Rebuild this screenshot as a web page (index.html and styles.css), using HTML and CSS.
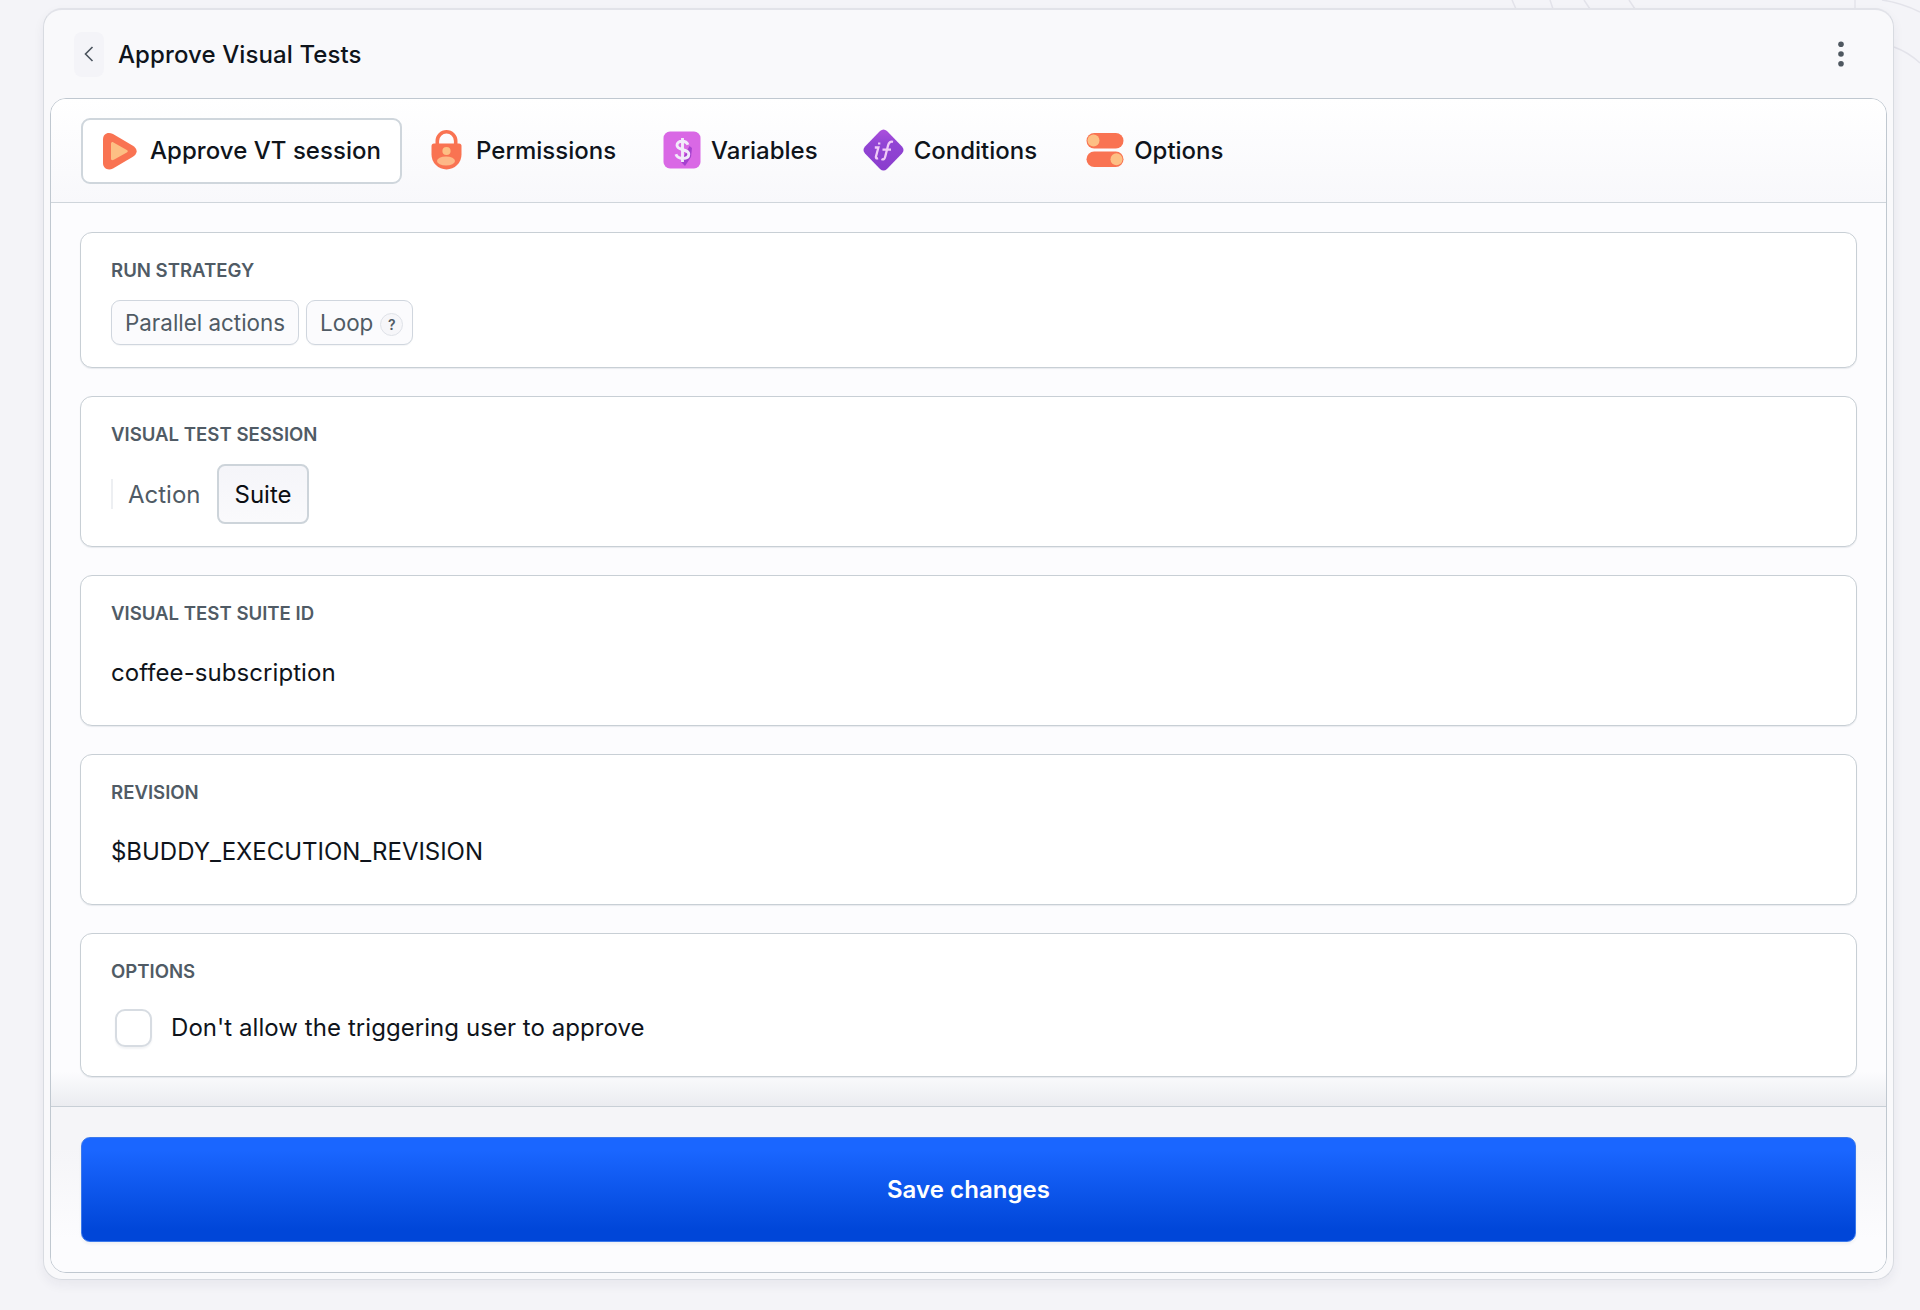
FILE: index.html
```
<!DOCTYPE html>
<html lang="en">
<head>
    <meta charset="UTF-8">
    <meta name="viewport" content="width=device-width, initial-scale=1.0">
    <title>Approve Visual Tests</title>
    <link rel="stylesheet" href="styles.css">
</head>
<body>
    <svg class="bg-lines" width="420" height="70" viewBox="1500 0 420 70">
        <path d="M1512 0l4 9M1550 0l3 9M1584 0l6 9M1629 0l6 9M1855 0v9M1882 0q20 3 38 12M1894 47q14 5 26 16"/>
    </svg>

    <div class="panel">
        <header class="panel-header">
            <button class="back" type="button" aria-label="Back">
                <svg width="10" height="18" viewBox="0 0 10 18"><path d="M8.500 2L1.500 9l7 7"/></svg>
            </button>
            <h1 class="title">Approve Visual Tests</h1>
            <button class="more" type="button" aria-label="More">
                <svg width="6" height="26" viewBox="0 0 6 26">
                    <circle cx="3" cy="3.2" r="2.8"/>
                    <circle cx="3" cy="13" r="2.8"/>
                    <circle cx="3" cy="22.8" r="2.8"/>
                </svg>
            </button>
        </header>

        <main class="content">
            <nav class="tabs">
                <a class="tab tab-active">
                    <svg width="36" height="38" viewBox="0 0 36 38">
                        <path d="M1 7.500C1 1.500 6-.5 11 2l19.500 11.500c5.500 3.500 5.500 8 0 11.500L11 36.500C6 39 1 36.500 1 31z" fill="#f97352"/>
                        <path d="M9 12.200c0-2 1-2.600 2.500-1.800L24.800 18c1.300.8 1.300 1.700 0 2.500l-13 7.200c-1.800.9-2.800.4-2.800-1.200z" fill="#fdbf84"/>
                    </svg>
                    <span class="tab-text">Approve VT session</span>
                </a>
                <a class="tab tab-permissions">
                    <svg width="31" height="40" viewBox="0 0 31 40">
                        <path d="M6.300 16V11a9.200 9.200 0 0 1 18.400 0v5" fill="none" stroke="#f97352" stroke-width="3.600"/>
                        <path d="M3 13.500h25q2.500 0 2.500 2.500v8.500a15 15 0 0 1-30 0V16q0-2.500 2.500-2.500z" fill="#f97352"/>
                        <circle cx="15.500" cy="21" r="4.100" fill="#fdbf84"/>
                        <ellipse cx="15" cy="31" rx="9" ry="4.500" fill="#fdb887"/>
                    </svg>
                    <span class="tab-text">Permissions</span>
                </a>
                <a class="tab">
                    <svg width="38" height="38" viewBox="0 0 38 38">
                        <rect x=".5" y=".5" width="37" height="37" rx="6.500" fill="#d968e5"/>
                        <path d="M26.500 15l2.500 2-1 9-6 9-4-4z" fill="#a541cf"/>
                        <path d="M25 13.800c-1-2.400-3-3.500-5.800-3.500-3.300 0-5.200 1.600-5.200 4 0 5.700 11.800 3.200 11.800 8.800 0 2.800-2.200 4.400-5.900 4.400-3.500 0-6-1.500-7-4.200M19.500 7v24" fill="none" stroke="#f2eafa" stroke-width="2.900"/>
                    </svg>
                    <span class="tab-text">Variables</span>
                </a>
                <a class="tab tab-conditions">
                    <svg width="41" height="42" viewBox="0 0 41 42">
                        <defs>
                            <linearGradient id="ifFill" x1="0" y1="0" x2="0" y2="1">
                                <stop offset="0" stop-color="#ac4fdd"/>
                                <stop offset=".35" stop-color="#9144d4"/>
                                <stop offset="1" stop-color="#8a3dcd"/>
                            </linearGradient>
                        </defs>
                        <path d="M17 2.100q3.500-3 7 0l15 15.400q3 3.500 0 7L24 39.900q-3.500 3-7 0L2 24.500q-3-3.500 0-7z" fill="url(#ifFill)"/>
                        <path d="M11.800 18.500h3.600l-2.500 9.300q-.4 2 2.200 1.500M16.200 13.400v2.200M18.500 30q2.700 1.500 3.700-2.200l2.900-11.600q1.100-4.400 4.900-3.300M19.500 20.700h8.500" fill="none" stroke="#f0caf7" stroke-width="2.300"/>
                    </svg>
                    <span class="tab-text">Conditions</span>
                </a>
                <a class="tab tab-options">
                    <svg width="38" height="36" viewBox="0 0 38 36">
                        <rect x=".5" y="1" width="37" height="15.500" rx="7.700" fill="#f97352"/>
                        <rect x=".5" y="19.500" width="37" height="15.500" rx="7.700" fill="#f97352"/>
                        <circle cx="7.500" cy="8.500" r="6" fill="#fdbf84"/>
                        <circle cx="30.500" cy="27.300" r="6" fill="#fdbf84"/>
                    </svg>
                    <span class="tab-text">Options</span>
                </a>
            </nav>

            <form class="settings">
                <section class="card card-run">
                    <h2 class="label">RUN STRATEGY</h2>
                    <div class="chips">
                        <button class="chip" type="button">Parallel actions</button>
                        <button class="chip chip-loop" type="button">Loop <span class="help">?</span></button>
                    </div>
                </section>

                <section class="card">
                    <h2 class="label">VISUAL TEST SESSION</h2>
                    <div class="switch">
                        <span class="switch-item">Action</span>
                        <span class="switch-item switch-on">Suite</span>
                    </div>
                </section>

                <section class="card">
                    <h2 class="label">VISUAL TEST SUITE ID</h2>
                    <div class="value">coffee-subscription</div>
                </section>

                <section class="card">
                    <h2 class="label">REVISION</h2>
                    <div class="value value-rev">$BUDDY_EXECUTION_REVISION</div>
                </section>

                <section class="card card-options">
                    <h2 class="label">OPTIONS</h2>
                    <label class="check">
                        <input type="checkbox" class="check-box">
                        <span>Don't allow the triggering user to approve</span>
                    </label>
                </section>
            </form>

            <footer class="panel-footer">
                <button class="save" type="button">Save changes</button>
            </footer>
        </main>
    </div>
</body>
</html>
```
FILE: styles.css
```
* {
    box-sizing: border-box;
}
body {
    margin: 0;
    height: 1310px;
    padding: 8px 26px 30px 43px;
    background-color: #f4f4f8;
    font-family: Inter, sans-serif;
    color: #0f141b;
    overflow: hidden;
}
button {
    font-family: inherit;
    border: none;
    background: none;
    padding: 0;
}
svg {
    display: block;
    flex: none;
}
.bg-lines {
    position: absolute;
    top: 0;
    right: 0;
    z-index: -1;
    fill: none;
    stroke: #e3e3ea;
    stroke-width: 1.5;
}

/* outer frame */
.panel {
    height: 1272px;
    padding: 0 6px 6px;
    display: flex;
    flex-direction: column;
    background-color: #f9f9fb;
    border: 1px solid #d8dbe1;
    border-top: 2px solid #e2e3e9;
    border-radius: 19px;
    box-shadow: 0 5px 12px rgba(30, 40, 70, 0.06);
}
.panel-header {
    height: 88px;
    flex: none;
    display: flex;
    align-items: center;
    padding: 0 43px 0 24px;
}
.back {
    width: 30px;
    height: 45px;
    border-radius: 8px;
    background-color: #f4f4f8;
    display: flex;
    align-items: center;
    justify-content: center;
}
.back svg {
    margin-right: 1px;
    fill: none;
    stroke: #4a535d;
    stroke-width: 1.6;
}
.title {
    margin: 0 auto 0 14px;
    padding-top: 1px;
    font-size: 24px;
    font-weight: 500;
    line-height: 30px;
    letter-spacing: 0.1px;
}
.more svg {
    fill: #4f5860;
}

/* inner frame */
.content {
    flex: 1;
    display: flex;
    flex-direction: column;
    border: 1px solid #c0c8d0;
    border-radius: 16px;
    background-color: #fcfcfe;
    overflow: hidden;
}
.tabs {
    height: 104px;
    flex: none;
    display: flex;
    align-items: center;
    padding: 1px 30px 0;
    background: linear-gradient(#ffffff, #f8f8fb);
    border-bottom: 1px solid #cfd5db;
}
.tab {
    height: 66px;
    display: flex;
    align-items: center;
    padding: 0 17px 2px 30px;
    font-size: 24px;
    font-weight: 500;
}
.tab-text {
    margin-left: 10px;
}
.tab-active {
    padding: 0 19px 1px;
    border: 2px solid #cfd6dc;
    border-radius: 9px;
    background-color: #fff;
}
.tab-active .tab-text {
    margin-left: 12px;
    letter-spacing: 0.04px;
}
.tab-permissions {
    padding-left: 29px;
}
.tab-permissions .tab-text {
    margin-left: 14px;
}
.tab-conditions {
    padding-left: 28px;
}
.tab-options {
    padding-left: 32px;
}

.settings {
    flex: 1;
    display: flex;
    flex-direction: column;
    gap: 28px;
    padding: 29px;
    background: linear-gradient(rgba(235, 236, 240, 0), #ebecf0) bottom / 100% 34px no-repeat;
}
.card {
    height: 151px;
    flex: none;
    padding: 27px 30px 0;
    background-color: #fff;
    border: 1px solid #c8cfd5;
    border-radius: 12px;
    box-shadow: 0 1px 1px rgba(30, 50, 80, 0.09);
}
.card-run {
    height: 136px;
}
.card-options {
    height: 144px;
}
.label {
    margin: 0;
    font-size: 18.6px;
    font-weight: 600;
    line-height: 20px;
    color: #505b65;
}
.chips {
    display: flex;
    gap: 7px;
    margin-top: 20px;
}
.chip {
    height: 45px;
    padding: 0 13px;
    display: flex;
    align-items: center;
    font-size: 22.4px;
    color: #505b65;
    background-color: #fbfbfd;
    border: 1px solid #d0d6de;
    border-radius: 9px;
    box-shadow: 0 1px 1px rgba(30, 50, 80, 0.05);
}
.chip-loop {
    padding-right: 9px;
}
.help {
    width: 23px;
    height: 23px;
    margin: 3px 0 0 7px;
    border: 1px solid #dfe2e8;
    border-radius: 50%;
    background-color: #f6f6f9;
    font-size: 14px;
    font-weight: 600;
    line-height: 22px;
    text-align: center;
}
.switch {
    display: flex;
    align-items: center;
    margin-top: 20px;
    font-size: 24px;
    color: #505b65;
}
.switch-item {
    height: 30px;
    padding: 0 16px 0 15px;
    line-height: 31px;
    border-left: 2px solid #edeff2;
}
.switch-on {
    height: 60px;
    padding: 0 15px 0 16px;
    line-height: 57px;
    color: #0b0e13;
    background: linear-gradient(#f5f5f9, #fafafc);
    border: 2px solid #cdd4da;
    border-radius: 8px;
}
.value {
    margin-top: 35px;
    font-size: 24px;
    line-height: 30px;
    letter-spacing: 0.07px;
}
.value-rev {
    letter-spacing: -0.03px;
}
.check {
    display: flex;
    align-items: center;
    margin: 28px 0 0 4px;
    font-size: 24px;
    line-height: 38px;
    letter-spacing: 0.06px;
}
.check-box {
    appearance: none;
    width: 37px;
    height: 38px;
    margin: 0 19px 0 0;
    background-color: #fff;
    border: 2px solid #d7dce2;
    border-radius: 10px;
    box-shadow: 0 2px 2px rgba(30, 50, 80, 0.06);
}

.panel-footer {
    height: 166px;
    flex: none;
    padding: 30px 30px 0;
    background: linear-gradient(#f5f5f8, #f5f5f8 25%, #fcfcfe 80%);
    border-top: 1px solid #c8cfd6;
}
.save {
    width: 100%;
    height: 105px;
    border: 1px solid #3b79ec;
    border-radius: 9px;
    background: linear-gradient(#1a66ff 12%, #0046d8 90%);
    color: #fff;
    font-size: 24px;
    font-weight: 600;
    letter-spacing: 0.06px;
    box-shadow: 0 2px 3px rgba(30, 50, 80, 0.06);
}
```
